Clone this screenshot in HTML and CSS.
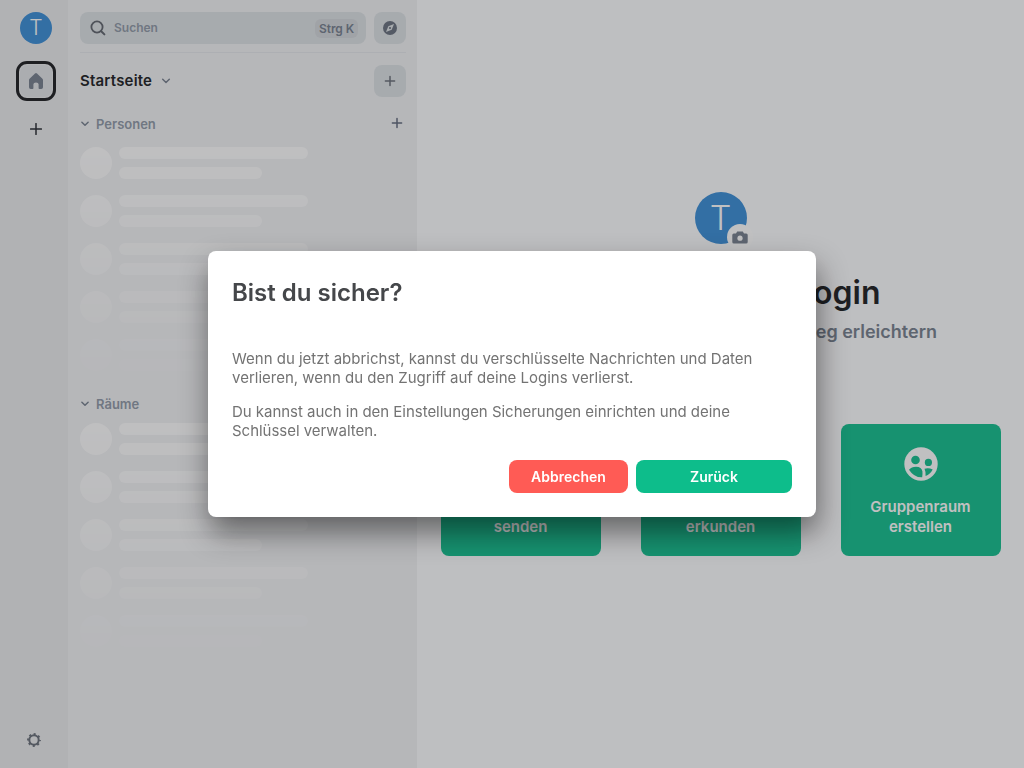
FILE: index.html
```html
<!DOCTYPE html>
<html lang="de">
<head>
<meta charset="utf-8">
<title>Startseite</title>
<link rel="stylesheet" href="styles.css">
</head>
<body>
<div class="app">
  <nav class="spaces">
    <div class="avatar avatar-small">T</div>
    <div class="space-home"><div class="space-home-inner">
      <svg width="16" height="18" viewBox="0 0 16 18"><path d="M1 8.2Q1 7.1 1.8 6.4L7 1.5Q8 .7 9 1.5L14.2 6.4Q15 7.1 15 8.2V15.3Q15 17 13.3 17H11.3Q10.6 17 10.6 16.2V12.2Q10.6 10.4 8 10.4T5.4 12.2V16.2Q5.4 17 4.7 17H2.7Q1 17 1 15.3Z" fill="#737d8c"/></svg>
    </div></div>
    <svg class="space-add" width="12" height="12" viewBox="0 0 12 12"><path d="M6 .6V11.4M.6 6H11.4" class="line dark"/></svg>
    <svg class="gear" width="16" height="16" viewBox="0 0 16 16"><circle cx="8" cy="8" r="4.7" fill="none" stroke="#656c76" stroke-width="2"/><circle cx="8" cy="8" r="6" fill="none" stroke="#656c76" stroke-width="1.8" stroke-dasharray="2.1 2.612" stroke-dashoffset="1.05"/></svg>
  </nav>
  <aside class="panel">
    <div class="filter">
      <div class="search">
        <svg width="16" height="16" viewBox="0 0 16 16"><circle cx="7" cy="7" r="5.6" fill="none" stroke="#5c626b" stroke-width="1.8"/><path d="M11.2 11.2L14.4 14.4" stroke="#5c626b" stroke-width="2" stroke-linecap="round"/></svg>
        <span class="search-label">Suchen</span><span class="shortcut">Strg K</span>
      </div>
      <div class="square"><svg width="16" height="16" viewBox="0 0 16 16"><circle cx="8" cy="8" r="7" fill="#656e7c"/><path d="M12 4L9.7 9.7L4 12L6.3 6.3Z" fill="#dce1e4"/><circle cx="8" cy="8" r="1.1" fill="#656e7c"/></svg></div>
    </div>
    <div class="header">
      <span class="header-title">Startseite</span>
      <svg width="10" height="6" viewBox="0 0 10 6"><path d="M1.7 1.2L5 4.5L8.3 1.2" class="line chev"/></svg>
      <div class="square header-add"><svg width="12" height="12" viewBox="0 0 12 12"><path d="M6 1.4V10.6M1.4 6H10.6" class="line mid"/></svg></div>
    </div>
    <section class="group people">
      <div class="group-head"><svg width="10" height="6" viewBox="0 0 10 6"><path d="M1.9 1.2L5 4.2L8.1 1.2" class="line chev"/></svg><span>Personen</span><svg class="group-add" width="12" height="12" viewBox="0 0 12 12"><path d="M6 1.4V10.6M1.4 6H10.6" class="line slate"/></svg></div>
      <div class="skeleton">
        <div class="bone"><i></i><b></b></div><div class="bone"><i></i><b></b></div><div class="bone"><i></i><b></b></div><div class="bone"><i></i><b></b></div><div class="bone"><i></i><b></b></div>
      </div>
    </section>
    <section class="group rooms">
      <div class="group-head"><svg width="10" height="6" viewBox="0 0 10 6"><path d="M1.9 1.2L5 4.2L8.1 1.2" class="line chev"/></svg><span>Räume</span></div>
      <div class="skeleton">
        <div class="bone"><i></i><b></b></div><div class="bone"><i></i><b></b></div><div class="bone"><i></i><b></b></div><div class="bone"><i></i><b></b></div><div class="bone"><i></i><b></b></div>
      </div>
    </section>
  </aside>
  <main class="home">
    <div class="avatar avatar-large">T
      <div class="camera"><svg width="16" height="13" viewBox="0 0 16 13"><path d="M5.2 .5H10.8L12 2.4H14.2Q15.7 2.4 15.7 3.9V11Q15.7 12.5 14.2 12.5H1.8Q.3 12.5 .3 11V3.9Q.3 2.4 1.8 2.4H4Z" fill="#737d8c"/><circle cx="8" cy="7.2" r="2.6" fill="#fff"/></svg></div>
    </div>
    <h1>Willkommen Login</h1>
    <h4>Jetzt lass uns dir deinen Einstieg erleichtern</h4>
    <div class="cards">
      <div class="card"><div class="card-icon"></div>Direktnachricht<br>senden</div>
      <div class="card"><div class="card-icon"></div>Öffentliche Räume<br>erkunden</div>
      <div class="card"><div class="card-icon"><svg width="34" height="34" viewBox="0 0 34 34"><circle cx="17" cy="17" r="16.7" fill="#fff"/><g fill="#0dbd8b"><circle cx="11.5" cy="13" r="4.3"/><circle cx="24.4" cy="15.4" r="3.6"/><path d="M5 22.7Q7.5 19.7 12 19.7Q17.7 19.8 18.4 24.5Q18.7 27 18.2 30.3Q10 30.6 5 22.7Z"/><path d="M20.5 21.7Q24.5 20.3 28.7 22.5Q26.2 27.4 21.6 29.1Q22 24.8 20.5 21.7Z"/></g></svg></div>Gruppenraum<br>erstellen</div>
    </div>
  </main>
</div>
<div class="backdrop">
  <div class="dialog" role="dialog">
    <h2>Bist du sicher?</h2>
    <div class="dialog-text">
      <p>Wenn du jetzt abbrichst, kannst du verschlüsselte Nachrichten und Daten<br>verlieren, wenn du den Zugriff auf deine Logins verlierst.</p>
      <p>Du kannst auch in den Einstellungen Sicherungen einrichten und deine<br>Schlüssel verwalten.</p>
    </div>
    <div class="buttons"><button class="danger">Abbrechen</button><button class="primary">Zurück</button></div>
  </div>
</div>
</body>
</html>
```
FILE: styles.css
```css
* { box-sizing: border-box; }
body { margin: 0; font-family: Inter, "Liberation Sans", sans-serif; color: #17191c; overflow: hidden; }
svg { display: block; flex: none; }
.app { display: flex; width: 1024px; height: 768px; background: #fdfeff; }
.line { fill: none; stroke-width: 1.5; stroke-linecap: round; stroke-linejoin: round; }
.dark { stroke: #22262c; }
.mid { stroke: #656c76; }
.slate { stroke: #5d6779; }
.chev { stroke: #737d8c; }
.avatar { border-radius: 50%; background: #368bd6; color: #fff; text-align: center; flex: none; }
.avatar-small { width: 32px; height: 32px; font-size: 21px; line-height: 32px; font-weight: 300; }
.spaces { width: 68px; flex: none; background: #eaebed; display: flex; flex-direction: column; align-items: center; padding: 12px 0 20px 4px; }
.space-home { margin-top: 17px; width: 40px; height: 40px; border: 3px solid #17191c; border-radius: 11px; display: flex; align-items: center; justify-content: center; }
.space-home-inner { width: 32px; height: 32px; border-radius: 8px; background: #e1e4e7; display: flex; align-items: center; justify-content: center; }
.space-add { margin-top: 22px; }
.gear { margin-top: auto; margin-right: 4px; }
.panel { width: 349px; flex: none; background: #f1f2f4; padding: 12px 11px 0 12px; }
.filter { display: flex; gap: 8px; height: 41px; border-bottom: 1px solid #e4e7eb; }
.search { flex: 1; height: 32px; border-radius: 8px; background: #dce1e4; display: flex; align-items: center; padding: 0 8px 0 10px; }
.search-label { margin-left: 8px; font-size: 12px; line-height: 16px; margin-bottom: 1px; font-weight: 600; color: #8d97a5; }
.shortcut { margin-left: auto; background: #d2d6da; border-radius: 6px; font-size: 12px; font-weight: 600; color: #737d8c; padding: 0 4px 0 4px; line-height: 19px; letter-spacing: -.1px; }
.square { width: 32px; height: 32px; border-radius: 8px; background: #dce1e4; display: flex; align-items: center; justify-content: center; flex: none; }
.header { display: flex; align-items: center; margin-top: 12px; height: 32px; }
.header-title { font-size: 15px; line-height: 18px; font-weight: 600; letter-spacing: .2px; margin: 0 9px 1px 0; }
.header-add { margin-left: auto; }
.group-head { display: flex; align-items: center; height: 24px; font-size: 13px; font-weight: 600; color: #8d97a5; }
.group-head span { margin-left: 6px; }
.group-add { margin: 0 3px 2px auto; }
.people { margin-top: 15px; height: 280px; }
.skeleton { margin-top: 11px; height: 240px; -webkit-mask-image: linear-gradient(rgba(0, 0, 0, .9), transparent 104%); mask-image: linear-gradient(rgba(0, 0, 0, .9), transparent 104%); }
.rooms .skeleton { margin-top: 7px; }
.bone { height: 48px; display: grid; grid-template-columns: 32px 1fr; grid-template-rows: 12px 12px; gap: 8px 7px; align-content: start; }
.bone::before { content: ""; grid-row: 1 / 3; border-radius: 50%; background: #fff; }
.bone i, .bone b { height: 12px; border-radius: 6px; background: #fff; }
.bone i { width: 189px; }
.bone b { width: 143px; }
.home { flex: 1; display: flex; flex-direction: column; align-items: center; padding-top: 192px; }
.avatar-large { width: 52px; height: 52px; font-size: 34px; line-height: 52px; font-weight: 300; position: relative; }
.camera { position: absolute; left: 32px; top: 32px; width: 26px; height: 26px; border-radius: 50%; background: #fff; display: flex; align-items: center; justify-content: center; }
h1, h2, h4, p { margin: 0; }
h1 { width: 320px; text-align: right; margin-top: 29px; font-size: 32px; line-height: 40px; font-weight: 600; white-space: nowrap; }
h4 { width: 433px; text-align: right; margin-top: 7px; font-size: 18px; line-height: 24px; font-weight: 600; color: #737d8c; white-space: nowrap; }
.cards { margin-top: 80px; display: flex; gap: 40px; }
.card { width: 160px; height: 132px; border-radius: 8px; background: #0dbd8b; color: #fff; text-align: center; font-size: 15px; line-height: 20px; font-weight: 600; padding-top: 23px; }
.card-icon { height: 50px; display: flex; justify-content: center; }
.backdrop { position: fixed; inset: 0; background: rgba(46, 48, 51, .3); display: flex; align-items: center; justify-content: center; }
.dialog { width: 608px; height: 266px; background: #fff; border-radius: 8px; padding: 24px; box-shadow: 2px 15px 30px 0 rgba(0, 0, 0, .48); display: flex; flex-direction: column; }
h2 { font-size: 24px; line-height: 36px; font-weight: 600; color: #45474a; }
.dialog-text { margin-top: 38px; font-size: 15px; line-height: 19px; color: #737373; white-space: nowrap; }
.dialog-text p + p { margin-top: 15px; letter-spacing: -.03px; }
.buttons { margin-top: auto; display: flex; justify-content: flex-end; gap: 8px; }
button { height: 33px; border: 0; border-radius: 8px; color: #fff; font: 600 14px Inter, "Liberation Sans", sans-serif; padding: 0; }
.danger { width: 119px; background: #ff5b55; }
.primary { width: 156px; background: #0dbd8b; }
```
